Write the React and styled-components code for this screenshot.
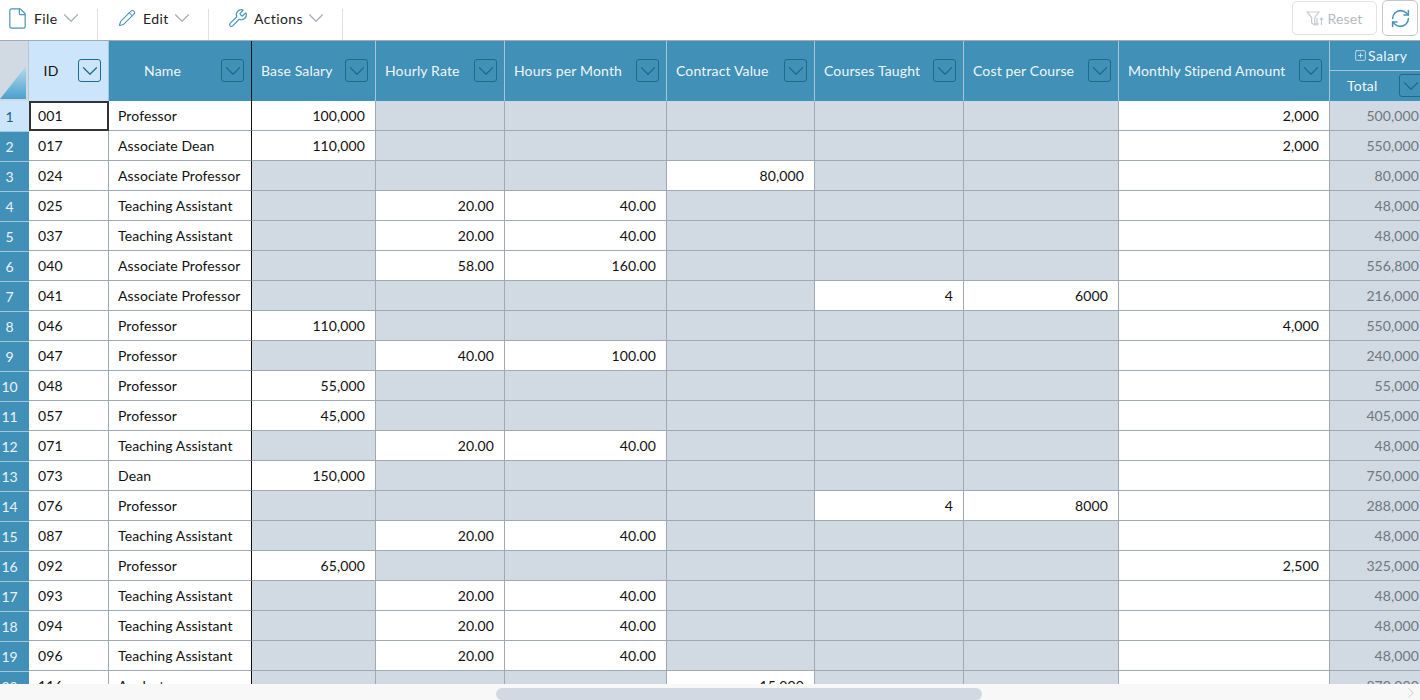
import React from "react";
import styled, { createGlobalStyle } from "styled-components";
import { File, Pencil, Wrench, ChevronDown, ChevronRight, RefreshCw, SquarePlus } from "lucide-react";

const GlobalStyle = createGlobalStyle`
  html, body {
    margin: 0;
    padding: 0;
    height: 100%;
    overflow: hidden;
    background: #fff;
    font-family: Lato, "Open Sans", sans-serif;
  }
`;

const COLUMNS = "29px 80px 143px 124px 129px 162px 148px 149px 155px 211px 120px";

const Page = styled.div`
  width: 1420px;
  height: 700px;
  display: flex;
  flex-direction: column;
  overflow: hidden;
`;

const Toolbar = styled.div`
  height: 40px;
  flex: none;
  display: flex;
  align-items: flex-start;
  box-sizing: border-box;
  background: #fff;
`;

const MenuItem = styled.div`
  height: 40px;
  box-sizing: border-box;
  width: ${(p) => p.$width}px;
  padding: 0 0 4px ${(p) => p.$pad}px;
  display: flex;
  align-items: center;
  color: #222;
  font-size: 14px;
  letter-spacing: 0.4px;
  position: relative;
  &::after {
    content: "";
    position: absolute;
    right: 0;
    top: 9px;
    height: 31px;
    width: 1px;
    background: #dde1e6;
  }
  & > svg {
    flex: none;
  }
  & > svg:first-child {
    color: #4a94ba;
    margin-right: ${(p) => p.$iconGap}px;
  }
  & > svg:last-child {
    color: #a3abb4;
    margin-left: 0;
  }
`;

const ToolbarRight = styled.div`
  margin-left: auto;
  display: flex;
  gap: 5px;
`;

const ResetButton = styled.div`
  width: 85px;
  height: 34px;
  margin-top: 1px;
  box-sizing: border-box;
  border: 1px solid #dfe2e6;
  border-radius: 5px;
  display: flex;
  align-items: center;
  justify-content: center;
  gap: 2px;
  color: #b4bac1;
  font-size: 14px;
  letter-spacing: 0.2px;
`;

const RefreshButton = styled.div`
  width: 36px;
  height: 36px;
  box-sizing: border-box;
  margin-right: 2px;
  border: 1px solid #c4c9cf;
  border-radius: 5px;
  display: flex;
  align-items: center;
  justify-content: center;
  color: #4a94ba;
`;

const Grid = styled.div`
  flex: 1;
  min-height: 0;
  overflow: hidden;
  border-top: 1px solid #9dacb8;
  box-sizing: border-box;
`;

const HeaderRow = styled.div`
  display: grid;
  grid-template-columns: ${COLUMNS};
  height: 60px;
  box-sizing: border-box;
  width: 1450px;
`;

const Corner = styled.div`
  background: #d1d9e3;
  border-right: 1px solid #b3c7d6;
  position: relative;
  &::after {
    content: "";
    position: absolute;
    left: 0;
    right: 2px;
    top: 25px;
    bottom: 2px;
    background: linear-gradient(180deg, #b7dbee, #4aa1ce);
    clip-path: polygon(100% 0, 100% 100%, 0 100%);
  }
`;

const HeadCell = styled.div`
  box-sizing: border-box;
  background: ${(p) => (p.$active ? "#cce5fb" : "#4190b7")};
  color: ${(p) => (p.$active ? "#111" : "#eef6fa")};
  border-right: 1px solid ${(p) => (p.$strong ? "#111" : "#a3c6da")};
  display: flex;
  align-items: center;
  justify-content: space-between;
  padding: 0 7px 1px 9px;
  font-size: 14px;
  letter-spacing: 0.15px;
  white-space: nowrap;
`;

const HeadLabel = styled.span`
  flex: ${(p) => (p.$center ? 1 : "none")};
  text-align: center;
  padding-right: ${(p) => (p.$center ? 14 : 0)}px;
`;

const DropButton = styled.span`
  width: 23px;
  height: 23px;
  flex: none;
  box-sizing: border-box;
  border: 1px solid #1d6a8e;
  border-radius: 3px;
  display: flex;
  align-items: center;
  justify-content: center;
  color: #1d6a8e;
  overflow: hidden;
  & > svg {
    flex: none;
  }
`;

const GroupCell = styled.div`
  display: flex;
  flex-direction: column;
  background: #4190b7;
  color: #eef6fa;
  font-size: 14px;
  letter-spacing: 0.15px;
`;

const GroupTitle = styled.div`
  height: 30px;
  box-sizing: border-box;
  border-bottom: 1px solid #a3c6da;
  padding-left: 24px;
  display: flex;
  align-items: center;
  gap: 1px;
  letter-spacing: 0.4px;
`;

const GroupSub = styled.div`
  flex: 1;
  display: flex;
  align-items: center;
  padding: 0 0 1px 17px;
  gap: 22px;
`;

const Row = styled.div`
  display: grid;
  grid-template-columns: ${COLUMNS};
  height: 30px;
  width: 1450px;
  box-sizing: border-box;
`;

const RowNumber = styled.div`
  box-sizing: border-box;
  background: ${(p) => (p.$active ? "#cce5fb" : "#4190b7")};
  color: ${(p) => (p.$active ? "#1d5f82" : "#e9f3f8")};
  border-top: 1px solid ${(p) => (p.$active ? "#cce5fb" : "#a3c6da")};
  font-size: 14px;
  padding-right: 10px;
  display: flex;
  align-items: center;
  justify-content: center;
`;

const Cell = styled.div`
  box-sizing: border-box;
  background: ${(p) => (p.$filled ? "#fff" : "#d1d9e3")};
  color: ${(p) => (p.$total ? "#6f7780" : "#111")};
  border-right: 1px solid ${(p) => (p.$strong ? "#111" : "#9fa9b3")};
  border-bottom: 1px solid #9fa9b3;
  display: flex;
  align-items: center;
  justify-content: ${(p) => (p.$right ? "flex-end" : "flex-start")};
  padding: 0 ${(p) => (p.$total ? "30px" : "10px")} 0 9px;
  font-size: 14px;
  letter-spacing: 0.1px;
  white-space: nowrap;
  ${(p) => p.$selected && "outline: 2px solid #333; outline-offset: -2px; border-right-color: #333; border-bottom-color: #333;"}
`;

const ScrollTrack = styled.div`
  height: 16px;
  flex: none;
  background: #f8f8f8;
  display: flex;
  align-items: flex-end;
  padding-left: 496px;
  position: relative;
  color: #b4b8bd;
  & > svg {
    position: absolute;
    right: 0;
    top: 0;
  }
`;

const ScrollThumb = styled.div`
  width: 486px;
  height: 12px;
  border-radius: 6px;
  background: #d3d9e3;
`;

const rows = [
  ["1", "001", "Professor", "100,000", "", "", "", "", "", "2,000", "500,000"],
  ["2", "017", "Associate Dean", "110,000", "", "", "", "", "", "2,000", "550,000"],
  ["3", "024", "Associate Professor", "", "", "", "80,000", "", "", "", "80,000"],
  ["4", "025", "Teaching Assistant", "", "20.00", "40.00", "", "", "", "", "48,000"],
  ["5", "037", "Teaching Assistant", "", "20.00", "40.00", "", "", "", "", "48,000"],
  ["6", "040", "Associate Professor", "", "58.00", "160.00", "", "", "", "", "556,800"],
  ["7", "041", "Associate Professor", "", "", "", "", "4", "6000", "", "216,000"],
  ["8", "046", "Professor", "110,000", "", "", "", "", "", "4,000", "550,000"],
  ["9", "047", "Professor", "", "40.00", "100.00", "", "", "", "", "240,000"],
  ["10", "048", "Professor", "55,000", "", "", "", "", "", "", "55,000"],
  ["11", "057", "Professor", "45,000", "", "", "", "", "", "", "405,000"],
  ["12", "071", "Teaching Assistant", "", "20.00", "40.00", "", "", "", "", "48,000"],
  ["13", "073", "Dean", "150,000", "", "", "", "", "", "", "750,000"],
  ["14", "076", "Professor", "", "", "", "", "4", "8000", "", "288,000"],
  ["15", "087", "Teaching Assistant", "", "20.00", "40.00", "", "", "", "", "48,000"],
  ["16", "092", "Professor", "65,000", "", "", "", "", "", "2,500", "325,000"],
  ["17", "093", "Teaching Assistant", "", "20.00", "40.00", "", "", "", "", "48,000"],
  ["18", "094", "Teaching Assistant", "", "20.00", "40.00", "", "", "", "", "48,000"],
  ["19", "096", "Teaching Assistant", "", "20.00", "40.00", "", "", "", "", "48,000"],
  ["20", "116", "Analyst", "", "", "", "15,000", "", "", "", "870,000"],
];

const headers = ["Base Salary", "Hourly Rate", "Hours per Month", "Contract Value", "Courses Taught", "Cost per Course", "Monthly Stipend Amount"];

const Drop = () => (
  <DropButton>
    <ChevronDown size={26} strokeWidth={1.1} />
  </DropButton>
);

// funnel with the two sort arrows, as on the disabled Reset button
const ResetIcon = () => (
  <svg width="19" height="15" viewBox="0 0 19 15" fill="none" stroke="#c6cbd1" strokeWidth="1.2">
    <path d="M1 1h12L8.8 6.5V14L5.6 12V6.5Z" />
    <path d="M11 7v7M9.5 12.3 11 14l1.5-1.7M15.5 14V7M14 8.7 15.5 7 17 8.7" />
  </svg>
);

export default function App() {
  return (
    <Page>
      <GlobalStyle />
      <Toolbar>
        <MenuItem $width={98} $pad={6} $iconGap={5}>
          <File size={23} strokeWidth={1.25} />
          File
          <ChevronDown size={26} strokeWidth={1} />
        </MenuItem>
        <MenuItem $width={111} $pad={20} $iconGap={7}>
          <Pencil size={18} strokeWidth={1.4} />
          Edit
          <ChevronDown size={26} strokeWidth={1} />
        </MenuItem>
        <MenuItem $width={134} $pad={19} $iconGap={6}>
          <Wrench size={20} strokeWidth={1.4} />
          Actions
          <ChevronDown size={26} strokeWidth={1} />
        </MenuItem>
        <ToolbarRight>
          <ResetButton>
            <ResetIcon />
            Reset
          </ResetButton>
          <RefreshButton>
            <RefreshCw size={21} strokeWidth={1.75} />
          </RefreshButton>
        </ToolbarRight>
      </Toolbar>
      <Grid>
        <HeaderRow>
          <Corner />
          <HeadCell $active>
            <HeadLabel $center>ID</HeadLabel>
            <Drop />
          </HeadCell>
          <HeadCell $strong>
            <HeadLabel $center>Name</HeadLabel>
            <Drop />
          </HeadCell>
          {headers.map((h) => (
            <HeadCell key={h}>
              <HeadLabel>{h}</HeadLabel>
              <Drop />
            </HeadCell>
          ))}
          <GroupCell>
            <GroupTitle>
              <SquarePlus size={13} strokeWidth={1.25} />
              Salary
            </GroupTitle>
            <GroupSub>
              Total
              <Drop />
            </GroupSub>
          </GroupCell>
        </HeaderRow>
        {rows.map((r, i) => (
          <Row key={r[0]}>
            <RowNumber $active={i === 0}>{r[0]}</RowNumber>
            <Cell $filled $selected={i === 0}>{r[1]}</Cell>
            <Cell $filled $strong>{r[2]}</Cell>
            {r.slice(3, 10).map((v, j) => (
              <Cell key={j} $right $filled={v !== "" || j === 6}>{v}</Cell>
            ))}
            <Cell $right $total>{r[10]}</Cell>
          </Row>
        ))}
      </Grid>
      <ScrollTrack>
        <ScrollThumb />
        <ChevronRight size={18} strokeWidth={0.9} />
      </ScrollTrack>
    </Page>
  );
}
